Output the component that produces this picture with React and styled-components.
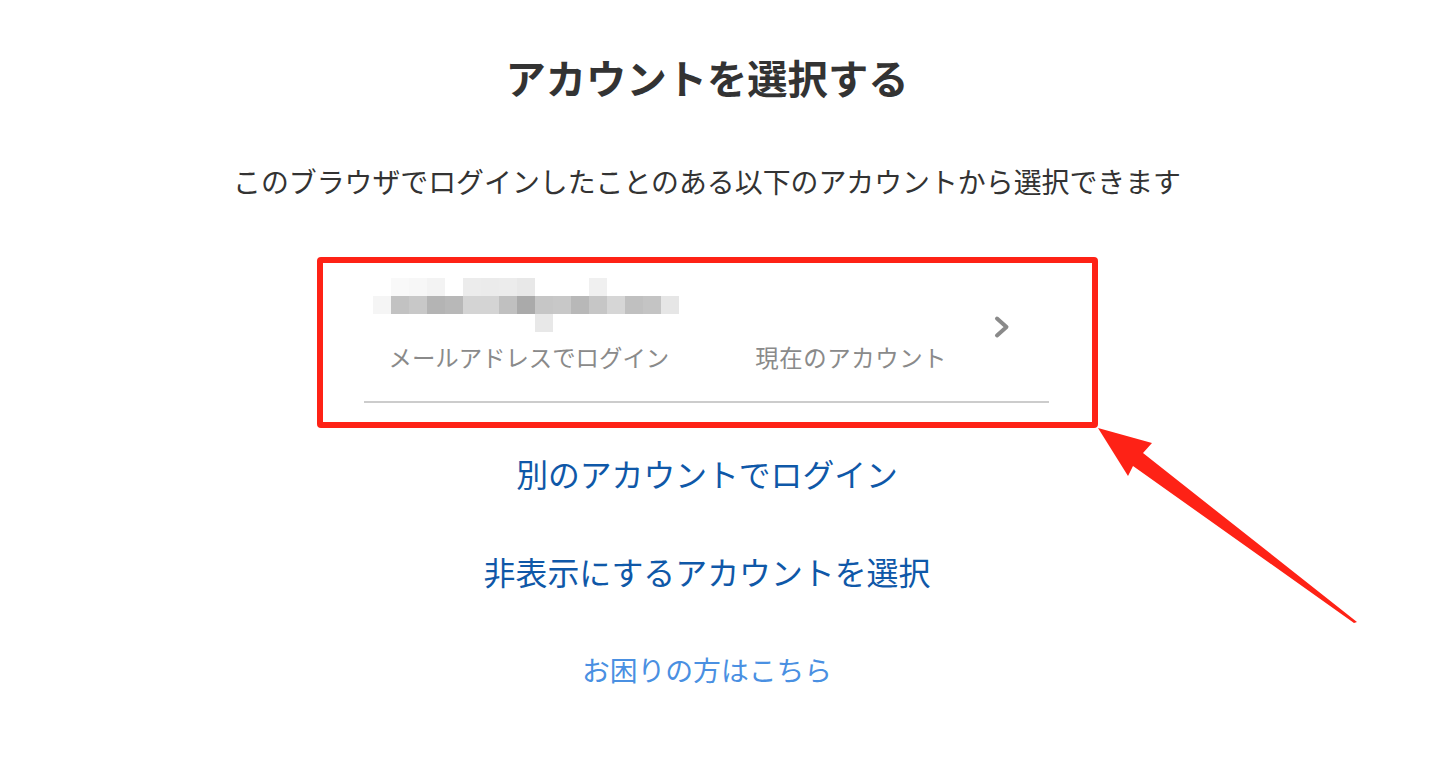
import styled, { createGlobalStyle } from 'styled-components'

const GlobalStyle = createGlobalStyle`
    html, body {
        margin: 0;
        padding: 0;
        background: #ffffff;
    }
    body {
        font-family: "Noto Sans CJK JP", "Noto Sans", sans-serif;
        color: #333333;
    }
`;

const Page = styled.main`
    position: relative;
    display: flex;
    flex-direction: column;
    align-items: center;
    width: 100%;
    height: 760px;
    padding: 53px 42px 0 0;
    box-sizing: border-box;
    overflow: hidden;
`;

const Title = styled.h1`
    margin: 0;
    font-size: 40.3px;
    line-height: 48px;
    font-weight: 700;
    color: #333333;
`;

const Lead = styled.p`
    margin: 60px 0 0;
    font-size: 27.9px;
    line-height: 40px;
    font-weight: 400;
    color: #333333;
`;

const Highlight = styled.section`
    margin-top: 56px;
    width: 781px;
    height: 171px;
    box-sizing: border-box;
    border: 6px solid #fe2216;
    border-radius: 4px;
    padding: 15px 43px 0 41px;
`;

const AccountItem = styled.button`
    display: flex;
    align-items: center;
    justify-content: space-between;
    width: 100%;
    padding: 0 38px 28px 9px;
    margin: 0;
    background: none;
    border: none;
    border-bottom: 2px solid #cccccc;
    font: inherit;
    text-align: left;
    cursor: pointer;
`;

const AccountInfo = styled.div`
    display: flex;
    flex-direction: column;
    gap: 9px;
`;

const Labels = styled.div`
    display: flex;
    gap: 86px;
    padding-left: 16px;
`;

const Label = styled.span`
    font-size: 23.4px;
    line-height: 32px;
    color: #8a8a8a;
    white-space: nowrap;
    letter-spacing: ${p => p.$wide ? '0.6px' : '0'};
`;

const Chevron = styled.svg`
    width: 18px;
    height: 24px;
    margin-top: 2px;
    flex-shrink: 0;
`;

const Links = styled.nav`
    display: flex;
    flex-direction: column;
    align-items: center;
`;

const ActionLink = styled.a`
    margin-top: ${p => p.$gap}px;
    font-size: ${p => p.$size}px;
    line-height: ${p => p.$lh}px;
    color: ${p => p.$light ? '#4a90e2' : '#0f58a8'};
    text-decoration: none;
    white-space: nowrap;
    cursor: pointer;
`;

const Annotation = styled.svg`
    position: absolute;
    top: 0;
    left: 0;
    width: 1456px;
    height: 760px;
    pointer-events: none;
`;

// pixelated (mosaic) email address
const mosaic = [
    ['', '#f9f9f9', '#f7f7f7', '#f3f3f3', '', '#ececec', '#ebebeb', '#ececec', '#e8e8e8', '', '', '', '#f0f0f0', '', '', '', ''],
    ['#f5f5f5', '#c2c2c2', '#c8c8c8', '#b4b4b4', '#b8b8b8', '#d4d4d4', '#d4d4d4', '#c0c0c0', '#aaaaaa', '#c6c6c6', '#c8c8c8', '#b8b8b8', '#c6c6c6', '#d6d6d6', '#c0c0c0', '#c4c4c4', '#e6e6e6'],
    ['', '', '', '', '', '', '', '', '', '#e8e8e8', '', '', '', '', '', '', ''],
];

function Mosaic () {
    return (
        <svg width="306" height="54" viewBox="0 0 306 54" aria-label="メールアドレス">
            {mosaic.map((row, y) =>
                row.map((c, x) => c && (
                    <rect key={`${x}-${y}`} x={x * 18} y={y * 18} width="18" height="18" fill={c} />
                ))
            )}
        </svg>
    )
}

function App () {
    return (
        <>
            <GlobalStyle />
            <Page>
                <Title>アカウントを選択する</Title>
                <Lead>このブラウザでログインしたことのある以下のアカウントから選択できます</Lead>
                <Highlight>
                    <AccountItem>
                        <AccountInfo>
                            <Mosaic />
                            <Labels>
                                <Label>メールアドレスでログイン</Label>
                                <Label $wide>現在のアカウント</Label>
                            </Labels>
                        </AccountInfo>
                        <Chevron viewBox="0 0 18 24">
                            <path d="M4 3.5 L13.5 12 L4 20.5" fill="none" stroke="#8a8a8a" strokeWidth="4" strokeLinecap="round" strokeLinejoin="round" />
                        </Chevron>
                    </AccountItem>
                </Highlight>
                <Links>
                    <ActionLink $gap={23} $size={31.8} $lh={44}>別のアカウントでログイン</ActionLink>
                    <ActionLink $gap={54} $size={31.9} $lh={44}>非表示にするアカウントを選択</ActionLink>
                    <ActionLink $gap={56} $size={27.8} $lh={40} $light>お困りの方はこちら</ActionLink>
                </Links>
                <Annotation viewBox="0 0 1456 760">
                    <polygon
                        points="1098,428 1152,443 1143,453 1357,622 1354,623 1133,466 1128,476"
                        fill="#fe2216"
                    />
                </Annotation>
            </Page>
        </>
    )
}

export default App
